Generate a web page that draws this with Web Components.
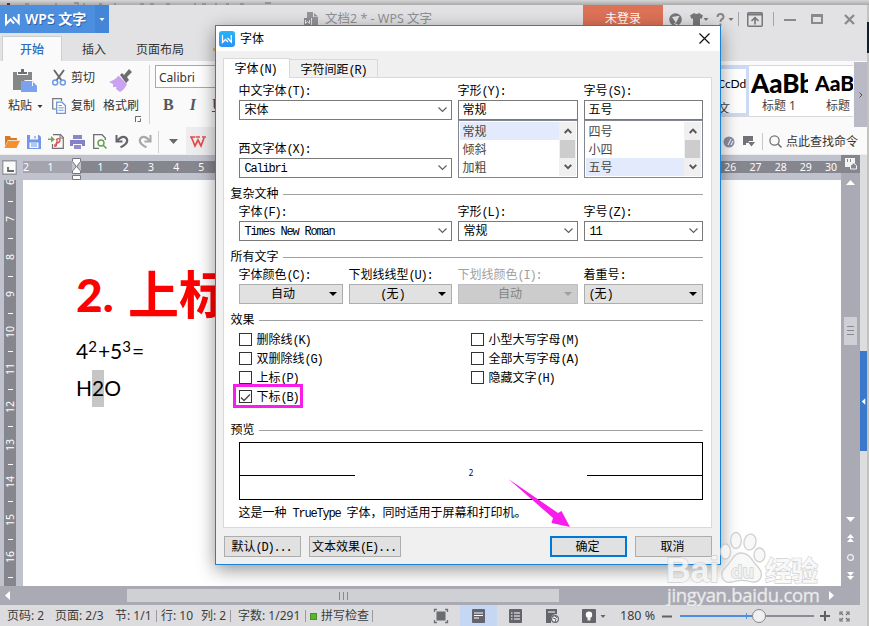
<!DOCTYPE html>
<html lang="zh-CN">
<head>
<meta charset="utf-8">
<title>WPS 文字</title>
<style>
html,body{margin:0;padding:0}
body{width:869px;height:626px;overflow:hidden;font:12px/16px "Noto Sans","Noto Sans CJK SC",sans-serif;color:#444}
</style>
</head>
<body>
<wps-app></wps-app>
<script>
const BASE = '<style>*{box-sizing:border-box}.row{display:flex}.c{flex:none;display:flex;align-items:center;white-space:pre}</style>';
function define(name, render) {
  customElements.define(name, class extends HTMLElement {
    constructor() { super(); this.attachShadow({mode: 'open'}); }
    connectedCallback() { this.shadowRoot.innerHTML = BASE + render(this); }
  });
}

/* ---- icons: [width, height, markup] ---- */
const ICONS = {
  logo: [15, 12, '<path d="M1 1V11L5.500 6.500 9 10.500M8 4L13.700 10V1" fill="none" stroke="#fff" stroke-width="2"/>'],
  down: [7, 4, '<path d="M.5 0H6.5L3.5 3.8Z" fill="currentColor"/>'],
  down5: [6, 3, '<path d="M.5 0H5.5L3 3Z" fill="currentColor"/>'],
  doc: [15, 14, '<path d="M3 0H9V5H14V14H8V6H3Z" fill="#959597"/><path d="M10 1L14 4.5H10Z" fill="#959597"/><path d="M0 6H7V13H0Z" fill="#8d8d8f"/><path d="M1.5 8V11.5L3.5 9.5 5.5 11.5V8" fill="none" stroke="#eee"/>'],
  globe: [13, 13, '<circle cx="6.5" cy="6.5" r="6.3" fill="#77777a"/><path d="M3 4L10.5 2.7 7 10Z" fill="#e4e4e6"/><path d="M5 10.5L9 12" stroke="#e4e4e6"/>'],
  shirt: [13, 12, '<path d="M4 0Q6.500 2 9 0L13 2.500 11.500 6 10 5.300V12H3V5.300L1.500 6 0 2.500Z" fill="#77777a"/>'],
  help: [9, 13, '<path d="M1.500 4Q1.500 1 4.500 1T7.500 4Q7.500 5.500 5.500 6.500 4.500 7 4.500 9" fill="none" stroke="#88888a" stroke-width="2"/><path d="M3.500 10.500h2v2h-2z" fill="#88888a"/>'],
  upbox: [16, 15, '<rect x=".75" y=".75" width="14.500" height="13.500" rx="1" fill="none" stroke="#77777a" stroke-width="1.500"/><path d="M1 2.500H15" stroke="#77777a" stroke-width="2"/><path d="M8 12.500V6M4.500 9L8 5.700 11.500 9" fill="none" stroke="#77777a" stroke-width="1.600"/>'],
  min: [12, 12, '<path d="M0 7H12" stroke="#8a8a8c" stroke-width="2"/>'],
  max: [12, 10, '<path d="M1 1H11V9H1Z" fill="none" stroke="#8a8a8c" stroke-width="2"/><path d="M0 1.500H12" stroke="#8a8a8c" stroke-width="3"/>'],
  close: [11, 11, '<path d="M1 1L10 10M10 1L1 10" stroke="#8a8a8c" stroke-width="2.300"/>'],
  paste: [25, 23, '<path d="M0 3H4V6H15V3H19V11H12L8 15V21H0Z" fill="#858688"/><path d="M5 3H8V0H11V3H14V5H5Z" fill="#6d6e70"/><path d="M8 12H19L24 17V23H8Z" fill="#7ba2ee"/><path d="M19 12V17H24" fill="#fafafa"/><path d="M20 13L24 17H20Z" fill="#7ba2ee"/>'],
  cut: [14, 16, '<path d="M2 0L10 11M12 0L4 11" stroke="#66676a" stroke-width="1.900"/><circle cx="3.200" cy="12.500" r="2.500" fill="none" stroke="#6f9be2" stroke-width="1.500"/><circle cx="10.800" cy="12.500" r="2.500" fill="none" stroke="#6f9be2" stroke-width="1.500"/>'],
  copy: [14, 16, '<path d="M4 11H.7V.7H9.500V3" fill="none" stroke="#77787a" stroke-width="1.200"/><path d="M4.700 4.200H10L13.400 7.500V15.300H4.700Z" fill="#fff" stroke="#6f95dd" stroke-width="1.300"/><path d="M6.500 7.500H10M6.500 9.800H11.700M6.500 12.200H11.700" stroke="#6f95dd"/>'],
  brush: [24, 24, '<path d="M11 6L13 4 15 6 20 0 23 3 18 8 20 11 17 14Z" fill="#6c6d70"/><path d="M9.500 6.500L18 15Q16 20 11 23L7 20 7.500 18 4 18 4 15 0 13Q6 11 9.500 6.500Z" fill="#cba2f0"/>'],
  corner: [6, 6, '<path d="M.5 6V.5H6M2.500 5.500H5.500V2.500" fill="none" stroke="#68696f"/>'],
  open: [16, 12, '<path d="M1 10V0H6L7 2H13V4H4Z" fill="#d97a20"/><path d="M4 4.800H16L12.500 12H.5Z" fill="#f6902d"/>'],
  save: [14, 14, '<path d="M0 0H12L14 2V14H0Z" fill="#7396e8"/><path d="M3 0H11V4.500H3ZM2.500 7.500H11.500V13H2.500Z" fill="#f5f8ff"/><path d="M8 1V3.500M4 9H10M4 11H10" stroke="#7396e8" stroke-width="1.200"/>'],
  pdf: [16, 15, '<path d="M5 .7H12.500L15.300 3.500V14.300H4.500V10" fill="none" stroke="#6f7073" stroke-width="1.200"/><path d="M12 1V4H15" fill="none" stroke="#6f7073"/><path d="M0 4.500H3V2L7 5.500 3 8.500V6H0Z" fill="#6eaa50"/><path d="M8 5.500Q12.500 3.500 12 6.500 11.500 9 8.500 9V11Q8 13 6.500 12 6.500 10 9 9V5.500" fill="none" stroke="#dc4e4e" stroke-width="1.300"/>'],
  print: [15, 14, '<path d="M3 0H12V4H3Z" fill="#8a86cb"/><path d="M0 5H15V11H12V9H3V11H0Z" fill="#8581c8"/><path d="M4 10H11V14H4Z" fill="#918dce"/>'],
  view: [14, 15, '<path d="M6 14.300H.7V.7H9L12.300 4V6" fill="none" stroke="#6f7073" stroke-width="1.300"/><circle cx="8" cy="9" r="3" fill="#fafafa" stroke="#60a24a" stroke-width="1.400"/><path d="M10.200 11.200L13.500 14.500" stroke="#60a24a" stroke-width="1.600"/>'],
  undo: [14, 13, '<path d="M1.500 0V6.500H7.500" fill="none" stroke="#64656a" stroke-width="2"/><path d="M2 6Q7 .5 10.500 2.500 14 5 10.500 9 8.500 11 5.500 12.200" fill="none" stroke="#64656a" stroke-width="2.200"/>'],
  redo: [14, 13, '<g transform="matrix(-1 0 0 1 14 0)"><path d="M1.500 0V6.500H7.500" fill="none" stroke="#a8a8aa" stroke-width="2"/><path d="M2 6Q7 .5 10.500 2.500 14 5 10.500 9 8.500 11 5.500 12.200" fill="none" stroke="#a8a8aa" stroke-width="2.200"/></g>'],
  down9: [9, 5, '<path d="M0 0H9L4.500 5Z" fill="#68696c"/>'],
  redw: [16, 11, '<path d="M0 1H5M1.500 1.500L5 10 8 4 11 10 14 2M5.500 1H10M12 1H16" fill="none" stroke="#e94848" stroke-width="1.700"/>'],
  leaf: [12, 12, '<circle cx="5" cy="6" r="5.500" fill="#8d90a2"/><path d="M4 9L7 3M7 9L9 5" stroke="#fff"/>'],
  flag: [12, 11, '<path d="M0 0H10V5H6L5 7H3V9H0Z" fill="#727377"/><path d="M5 6H12L8.500 10.500Z" fill="#727377"/>'],
  search: [13, 13, '<circle cx="5.500" cy="5.500" r="4.600" fill="none" stroke="#707176" stroke-width="1.300"/><path d="M9 9L12.500 12.500" stroke="#707176" stroke-width="1.600"/>'],
  tabsel: [15, 15, '<path d="M.75.75H14.250V14.250H.75Z" fill="#fafafa" stroke="#96969e" stroke-width="1.300"/><path d="M6 7V11H12" fill="none" stroke="#66676c" stroke-width="1.800"/>'],
  indent: [9, 22, '<path d="M.5 3.500V.5H8.500V3.500L5 8V9L8.500 13V15.500H.5V13L4 9V8Z" fill="#fff" stroke="#77787f"/><path d="M.5 17.500H8.500V21.500H.5Z" fill="#fff" stroke="#77787f"/>'],
  hand: [12, 12, '<path d="M0 0H10V5L5 9H0Z" fill="#f4f4f4"/><path d="M2.500 1V4M5.500 1V4" stroke="#86868e"/><path d="M5.500 7.500L8.500 5 11.500 7.500V11H5.500Z" fill="#86868e" stroke="#f4f4f4"/>'],
  triup: [9, 5, '<path d="M4.500 0L9 5H0Z" fill="#fff"/>'],
  tridown: [9, 5, '<path d="M0 0H9L4.500 5Z" fill="#fff"/>'],
  trileft: [5, 9, '<path d="M5 0V9L0 4.500Z" fill="#fff"/>'],
  triright: [5, 9, '<path d="M0 0V9L5 4.500Z" fill="#fff"/>'],
  dblup: [7, 8, '<path d="M3.500 0L7 4H0ZM3.500 4L7 8H0Z" fill="#fff"/>'],
  dbldown: [7, 8, '<path d="M3.500 8L7 4H0ZM3.500 4L7 0H0Z" fill="#fff"/>'],
  ring: [7, 7, '<circle cx="3.500" cy="3.500" r="2.900" fill="none" stroke="#f4f4f4" stroke-width="1.200"/>'],
  full: [14, 14, '<path d="M.5 3V.5H3M11 .5H13.500V3M13.500 11V13.500H11M3 13.500H.5V11" fill="none" stroke="#707176" stroke-width="1.300"/><path d="M2.500 2.500H11.500V11.500H2.500Z" fill="#6b6c70"/>'],
  page: [13, 14, '<rect width="13" height="14" rx="1" fill="#64656c"/><path d="M2 4H11M2 6.500H11M2 9H7" stroke="#fff"/>'],
  list: [13, 14, '<rect width="13" height="14" rx="1" fill="#64656c"/><path d="M2 4H3.500M5 4H11M2 7H3.500M5 7H11M2 10H3.500M5 10H11" stroke="#fff" stroke-width="1.200"/>'],
  web: [13, 14, '<path d="M0 0H11V5Q6 5 5 9L5 14H0Z" fill="#64656c"/><path d="M2 3H9" stroke="#fff"/><circle cx="9" cy="10" r="3.400" fill="#eee" stroke="#64656c" stroke-width="1.200"/><path d="M7 9L10 10 9 13M9 7L11 9" stroke="#64656c" fill="none"/>'],
  bulb: [14, 14, '<rect width="14" height="14" rx="1" fill="#64656c"/><circle cx="7" cy="5.700" r="3.200" fill="#fff"/><path d="M5.500 8H8.500V11.500H5.500Z" fill="#eee"/>'],
  minus: [10, 3, '<path d="M0 1.500H10" stroke="#606166" stroke-width="2"/>'],
  plus: [10, 10, '<path d="M0 5H10M5 0V10" stroke="#606166" stroke-width="2"/>'],
  expand: [11, 11, '<path d="M1 4V1H4M7 1H10V4M10 7V10H7M4 10H1V7M2 2L4 4M9 2L7 4M9 9L7 7M2 9L4 7" fill="none" stroke="#707176" stroke-width="1.200"/>'],
  wapp: [16, 16, '<defs><linearGradient id="g" x2="0" y2="1"><stop stop-color="#27b5f5"/><stop offset="1" stop-color="#2f8ff5"/></linearGradient></defs><rect width="16" height="16" rx="3" fill="url(#g)"/><path d="M3.500 4V11.500L6.500 8.500 9 11M8.500 7L12.300 11V4" fill="none" stroke="#fff" stroke-width="1.300"/>'],
  xthin: [11, 11, '<path d="M.5.500L10.500 10.500M10.500.500L.5 10.500" stroke="#111" stroke-width="1.200"/>'],
  chev: [9, 6, '<path d="M.5.500L4.500 4.500 8.500.500" fill="none" stroke="#606060" stroke-width="1.200"/>'],
  chevdn: [8, 6, '<path d="M.7.800L4 4.200 7.300.800" fill="none" stroke="#555" stroke-width="1.900"/>'],
  chevup: [8, 6, '<path d="M.7 5L4 1.600 7.300 5" fill="none" stroke="#555" stroke-width="1.900"/>'],
  tri: [8, 4, '<path d="M0 0H8L4 4Z" fill="currentColor"/>'],
  tick: [13, 13, '<path d="M2 6.500L5 9.500 11 3.500" fill="none" stroke="#444" stroke-width="1.300"/>'],
  gt: [4, 6, '<path d="M.5.500L3 3 .5 5.500" fill="none" stroke="#555"/>']
};
define('ui-icon', el => {
  const [w, h, d] = ICONS[el.getAttribute('name')];
  return `<style>:host{display:inline-block;flex:none;width:${w}px;height:${h}px}svg{display:block;overflow:visible}</style><svg width="${w}" height="${h}" viewBox="0 0 ${w} ${h}">${d}</svg>`;
});
const ic = (n, s = '') => `<ui-icon name="${n}" style="${s}"></ui-icon>`;
const cell = (w, c, s = '') => `<div class="c" style="width:${w}px;${s}">${c}</div>`;

/* Half-width latin runs on a 6px pitch beside 12px full-width characters */
define('sim-text', el => `<style>:host{display:block;height:14px;white-space:pre;font:12px/14px "Noto Sans CJK SC",sans-serif;color:inherit}
div{transform:translate(-.6px,-1px)}
span{font-family:"Liberation Mono",monospace;letter-spacing:-1.2px}</style><div>` +
  el.getAttribute('t').replace(/[\x20-\x7e]+/g, m => `<span>${m}</span>`) + '</div>');
const sim = (t, s = '') => `<sim-text t="${t}" style="${s}"></sim-text>`;

/* ---- main window ---- */
define('wps-titlebar', () => `<style>
:host{display:block;height:28px;color:#919193}
.row{height:28px;align-items:flex-start}.c{height:28px}
.sep{width:1px;height:14px;background:#a4a4a6;margin-top:7px;flex:none}
</style><div class="row">
${cell(95, ic('logo', 'margin:0 5px') + 'WPS 文字', 'background:#4c8fdf;color:#fff;font-size:14px;font-weight:600;text-shadow:1px 1px #2c62a8')}
${cell(14, ic('down5', 'margin-left:4px'), 'background:#4386d8;color:#fff')}
${cell(195, '')}${cell(21, ic('doc'))}${cell(258, '文档2 * - WPS 文字', 'font-size:12.5px')}
${cell(80, '未登录', 'background:#dd7257;color:#fff;justify-content:center')}
${cell(27, ic('globe', 'margin-left:6px'))}${cell(26, ic('shirt') + ic('down5', 'color:#777'))}
${cell(22, ic('help') + ic('down5', 'color:#777;margin-left:3px'))}
<div class="sep"></div>${cell(34, ic('upbox', 'margin-left:8px'))}<div class="sep"></div>
${cell(37, ic('min', 'margin-left:10px'))}${cell(33, ic('max'))}${cell(15, ic('close'))}
</div>`);

define('wps-tabs', () => `<style>
:host{display:block;height:28px;padding-top:3px}
.row{height:25px;align-items:center;color:#333}
.c{padding-top:2px}
.on{height:25px;background:#fafafa;border:1px solid #cfcfd2;border-bottom:0;justify-content:center;color:#2d6cc0;font-weight:500}
</style><div class="row">${cell(2, '')}<div class="c on" style="width:60px">开始</div>${cell(20, '')}${cell(54, '插入')}${cell(77, '页面布局')}${cell(3, '<i style="width:3px;height:3px;background:#eeb060"></i>')}</div>`);

define('style-tile', el => `<style>
:host{display:block;flex:none;height:50px;overflow:hidden;color:#000;white-space:nowrap}
.s{height:33px;display:flex;align-items:center;overflow:hidden;font-family:Lato,sans-serif}
.n{height:14px;line-height:14px;color:#444}
</style><div class="s"><slot></slot></div><div class="n" style="text-indent:${el.getAttribute('indent')}px">${el.getAttribute('label')}</div>`);

define('wps-ribbon', () => `<style>
:host{display:block;height:64px;background:#fafafa;color:#333}
.bar{display:flex;height:64px;align-items:flex-start}
.big{display:flex;flex-direction:column;align-items:center;flex:none;padding-top:8px}
.big p{margin:5px 0 0;display:flex;align-items:center;height:18px}
.mid{flex:none;width:53px;padding:8px 0 0 7px}
.mid p{margin:0 0 11px;display:flex;gap:5px;height:17px;align-items:center;width:60px}
.sep{width:1px;height:59px;margin-top:4px;background:#d0d0d3;flex:none}
.font{width:62px;height:23px;border:1px solid #a9a9ad;background:#fff;font:12px/23px "Noto Sans",sans-serif;padding-left:3px}
.biu{display:flex;font:bold 16px/20px "Liberation Serif",serif;color:#55565a;padding:7px 0 0 8px;gap:16px}
.gal{display:flex;margin-top:4px;height:52px;border:1px solid #d8d8da;border-width:1px 0;width:134px;background:#fff;flex:none}
.more{width:13px;height:65px;margin:1px 0 0 1px;background:#b9bac5;display:flex;align-items:center;justify-content:center;flex:none}
</style><div class="bar">
<div class="big" style="width:45px;padding-left:6px">${ic('paste')}<p>粘贴${ic('down5', 'margin-left:5px')}</p></div>
<div class="mid"><p>${ic('cut')}<span style="white-space:nowrap">剪切</span></p><p>${ic('copy')}<span style="white-space:nowrap">复制</span></p></div>
<div class="big" style="width:46px">${ic('brush')}<p style="margin-top:4px;white-space:nowrap">格式刷</p>${ic('corner', 'align-self:flex-end;margin:1px 3px 0 0')}</div>
${cell(5, '')}<div class="sep"></div>
<div style="padding:4px 0 0 5px;width:569px;flex:none"><div class="font">Calibri</div><div class="biu"><span>B</span><i>I</i><u>U</u></div></div>
<div class="gal"><style-tile label="文" indent="-1" style="width:30px;border:3px solid #ccdaf6;height:50px;border-left:0"><span style="font-size:12px;margin:-4px 0 0 -2px">CcDd</span></style-tile>
<style-tile label="标题 1" indent="11" style="width:57px;margin-left:2px"><b style="font-size:26px;font-weight:900">AaBb</b></style-tile>
<style-tile label="标题 2" indent="11" style="width:38px;margin-left:7px"><b style="font-size:21px;font-weight:900">AaBb</b></style-tile></div>
<div class="more">${ic('gt')}</div></div>`);

define('wps-quickbar', () => `<style>
:host{display:block;height:30px;background:#fafafa;border-bottom:1px solid #eee;color:#333}
.row{height:33px;align-items:center;overflow:hidden}.c{height:29px}
</style><div class="row">${cell(4, '')}${cell(23, ic('open'))}${cell(21, ic('save'))}${cell(22, ic('pdf'))}${cell(23, ic('print'))}${cell(22, ic('view'))}${cell(23, ic('undo'))}${cell(20, ic('redo'))}
${cell(1, '', 'background:#d0d0d3;height:22px')}${cell(10, '')}${cell(17, ic('down9'))}${cell(36, ic('redw'), 'background:#ededef;padding-left:4px')}
${cell(502, '')}${cell(19, ic('leaf'))}${cell(19, ic('flag'))}${cell(1, '', 'background:#c8c8cc;height:17px')}${cell(6, '')}${cell(17, ic('search'))}${cell(80, '点此查找命令')}</div>`);

/* Numbers 6-25 of the horizontal scale lie under the dialog and stay blank */
define('wps-ruler', () => `<style>
:host{display:block;height:25px;background:#c0c2cd;font:10.5px/12px "Noto Sans",sans-serif;color:#fff}
.row{height:25px}.strip{margin-top:6px;height:12px;display:flex;flex:none}
.n{width:25.19px;text-align:center;flex:none}
</style><div class="row">${cell(23, ic('tabsel', 'margin-left:2px'), 'height:25px')}
<div class="strip" style="background:#a3a4ae;width:49px"><span style="width:15px">2</span><span class="n">1</span></div>
<div style="width:9px;padding-top:3px;flex:none">${ic('indent')}</div>
<div class="strip" style="background:#86868e;width:760px"><span class="n" style="margin-left:7px">1</span>${Array.from({length: 29}, (_, i) => `<span class="n">${i < 4 || i > 23 ? i + 2 : ''}</span>`).join('')}</div></div>`);

define('wps-vruler', () => `<style>
:host{display:block;width:23px;flex:none;background:#c0c2cd;padding-left:4px;overflow:hidden}
.s{width:12px;height:406px;background:#86868e;color:#fff;font:10.5px/12px "Noto Sans",sans-serif;overflow:hidden}
.i{height:37.6px;display:flex;flex-direction:column;align-items:center;justify-content:space-between}
.n{height:14px;writing-mode:vertical-rl;transform:rotate(180deg);text-align:center}
.t{width:5px;height:1px;background:#fff;margin-bottom:10.500px}
.in{margin-top:-5.500px}
</style><div class="s"><div class="in">${Array.from({length: 11}, (_, i) => `<div class="i"><span class="n">${i + 6}</span><span class="t"></span></div>`).join('')}</div></div>`);

define('wps-page', () => `<style>
:host{display:block;width:818px;flex:none;height:406px;background:#fff;color:#000;padding:82px 0 0 53px;font-family:Lato,sans-serif;white-space:nowrap}
h1{margin:0;height:64px;font:900 46px/66px Lato,"Noto Sans CJK SC",sans-serif;color:#f00;display:flex;width:240px;overflow:hidden}
h1 b{font:700 51px/60px "Noto Sans CJK SC",sans-serif}
p{margin:0;font-size:21px;height:37px;line-height:36px}
sup{font-size:15px;line-height:0;vertical-align:7.5px;margin:0 1px 0 0}
mark{background:#c6c6c6;color:#000;display:inline-block;height:37px;line-height:36px;vertical-align:top}
</style><h1><span style="width:52px">2.</span><b>上标</b></h1><p style="margin-top:7px">4<sup>2</sup>+5<sup>3</sup>=</p><p>H<mark>2</mark>O</p>`);

define('wps-vscroll', () => `<style>
:host{display:flex;flex-direction:column;align-items:center;width:19px;flex:none;height:431px;background:#aaaab4}
.top{width:19px;height:18px;background:#86868e;display:flex;align-items:center;justify-content:center;flex:none}
.thumb{width:13px;height:28px;background:#cfd0d5;margin-top:132px;padding:9px 3px;flex:none}
.thumb i{display:block;height:1px;background:#888890;margin-bottom:3px}
</style><div class="top">${ic('hand')}</div>${ic('triup', 'margin-top:7px')}<div class="thumb"><i></i><i></i><i></i></div>
${ic('tridown', 'margin-top:172px')}${ic('dblup', 'margin-top:12px')}${ic('ring', 'margin-top:12px')}${ic('dbldown', 'margin-top:11px')}`);

define('wps-hscroll', () => `<style>
:host{display:flex;align-items:center;height:19px;background:#aaaab4;width:860px}
.t{width:432px;height:13px;background:#cfd0d4;margin-left:117px;display:flex;justify-content:center;gap:3px;padding-top:3px}
.t i{width:1px;height:8px;background:#888890}
</style>${ic('trileft', 'margin-left:5px')}<div class="t"><i></i><i></i><i></i></div>${ic('triright', 'margin-left:270px')}`);

define('wps-status', () => `<style>
:host{display:block;height:21px;background:#dcdcdf;color:#3c3c40}
.row{height:21px;align-items:center}.c{height:21px;padding-top:1px}
.sep{width:1px;height:12px;background:#9a9a9e;flex:none}
.track{width:134px;height:16px;display:flex;align-items:center;flex:none}
</style><div class="row">${cell(7, '')}${cell(48, '页码: 2')}${cell(60, '页面: 2/3')}${cell(41, '节: 1/1')}<div class="sep"></div>${cell(4, '')}${cell(40, '行: 10')}${cell(29, '列: 2')}<div class="sep"></div>${cell(7, '')}${cell(67, '字数: 1/291')}<div class="sep"></div>
${cell(4, '')}${cell(11, '<i style="width:7px;height:7px;background:#5cb531;border:1px solid #3f972c"></i>')}${cell(51, '拼写检查')}<div class="sep"></div>
${cell(61, '')}${cell(26, ic('full'))}${cell(37, ic('page'), 'background:#c5d7f3;padding-left:12px')}${cell(12, '')}${cell(37, ic('list'))}${cell(36, ic('web'))}${cell(18, ic('bulb'))}${cell(20, ic('down5', 'color:#666'))}
${cell(42, '180 %', 'font-size:12.5px')}${cell(18, ic('minus'))}
<div class="track"><i style="width:66px;height:2px;background:#4b8de0"></i><i style="width:1px;height:6px;background:#4b8de0"></i><i style="width:5px;height:2px;background:#4b8de0"></i><i style="width:14px;height:14px;border:1px solid #88888c;border-radius:7px;background:#f0f0f0"></i><i style="width:48px;height:2px;background:#8a8b94"></i></div>
${cell(6, '')}${cell(19, ic('plus'))}${cell(12, ic('expand'))}</div>`);

/* ---- dialog controls ---- */
define('combo-box', el => `<style>
:host{display:flex;height:20px;border:1px solid #7a7a7a;background:#fff;align-items:center;padding:0 4px 0 5px;box-sizing:border-box;color:#000}
sim-text{flex:1}</style>${sim(el.getAttribute('value'))}${el.hasAttribute('plain') ? '' : ic('chev')}`);
define('drop-button', el => {
  const off = el.hasAttribute('disabled');
  return `<style>:host{display:flex;height:20px;border:1px solid ${off ? '#bfbfbf' : '#adadad'};background:${off ? '#ccc' : '#e1e1e1'};align-items:center;padding:0 5px 0 4px;box-sizing:border-box;color:${off ? '#838383' : '#000'}}
sim-text{flex:1;text-align:${el.hasAttribute('left') ? 'left' : 'center'};padding-right:${el.hasAttribute('left') ? 0 : 6}px}</style>${sim(el.getAttribute('value'))}${ic('tri', off ? 'color:#a0a0a0' : '')}`;
});
define('list-box', el => {
  const sel = +el.getAttribute('selected');
  return `<style>:host{display:flex;height:58px;border:1px solid #828790;background:#fff;padding:1px;box-sizing:border-box;color:#444}
.l{flex:1}.l div{height:18px;padding:3px 0 0 3px}.l .on{background:#e2eafc}
.s{width:17px;background:#f0f0f0;display:flex;flex-direction:column;align-items:center;justify-content:space-between;padding:6px 0}
.s i{width:15px;height:18px;background:#cdcdcd}</style>
<div class="l">${el.getAttribute('items').split(',').map((t, i) => `<div class="${i === sel ? 'on' : ''}">${sim(t)}</div>`).join('')}</div>
<div class="s">${ic('chevup')}<i></i>${ic('chevdn')}</div>`;
});
define('form-field', el => `<style>:host{display:block;box-sizing:border-box}.l{height:16px;color:${el.hasAttribute('dim') ? '#a0a0a0' : '#000'}}</style>
<div class="l">${sim(el.getAttribute('label'))}</div><slot></slot>`);
define('group-title', el => `<style>:host{display:flex;height:14px;align-items:center;gap:4px;margin-left:-8px;color:#000}hr{flex:1;border:0;height:1px;background:#a0a0a0;margin:0}</style>${sim(el.getAttribute('label'))}<hr>`);
define('check-item', el => `<style>:host{display:flex;height:19px;gap:5px;align-items:flex-start;color:#000}
i{width:13px;height:13px;border:1px solid #333;background:#fff;flex:none}i ui-icon{margin:-1px}sim-text{flex:none}</style>
<i>${el.hasAttribute('checked') ? ic('tick') : ''}</i>${sim(el.getAttribute('label'))}`);
define('push-button', el => `<style>:host{display:flex;height:21px;border:1px solid #adadad;background:#e1e1e1;align-items:center;justify-content:center;box-sizing:border-box;color:#000;flex:none}
:host([primary]){border:2px solid #0078d7}</style>${sim(el.getAttribute('label'), 'margin-right:1px')}`);

define('font-dialog', () => `<style>
:host{display:flex;flex-direction:column;box-sizing:border-box;width:506px;height:540px;border:1px solid #1883d7;background:#f0f0f0;box-shadow:0 5px 17px rgba(0,0,0,.42);color:#000}
.title{height:25px;background:#fff;display:flex;align-items:center;padding:0 10px 0 3px;gap:5px;flex:none}
.title span{flex:1}
.tabs{display:flex;align-items:flex-end;height:26px;padding-left:7px;flex:none}
.tabs div{border:1px solid #d9d9d9;border-bottom:0}
.t1{width:67px;height:20px;background:#fff;padding:3px 0 0 11px;margin-bottom:-1px;position:relative}
.t2{width:88px;height:18px;padding:3px 0 0 11px;border-left:0!important}
.panel{margin:0 0 0 7px;width:489px;height:451px;border:1px solid #d9d9d9;background:#fff;padding:6px 7px 0 15px;flex:none}
.grid{display:grid;column-gap:6px;width:464px}
.g3{grid-template-columns:213px 120px 119px}
.g4{grid-template-columns:104px 103px 120px 119px}
.checks{display:grid;grid-template-columns:232px 1fr;height:76px;margin-top:6px}
group-title{width:472px}
.prev{height:58px;border:1px solid #000;width:464px;margin-top:5px;display:flex;align-items:center;justify-content:space-between;font:8px/10px "Noto Sans",sans-serif}
.prev i{width:115px;height:1px;background:#000;margin-top:8px}
.btns{display:flex;padding:8px 0 0 8px}
</style>
<div class="title">${ic('wapp')}<span>字体</span>${ic('xthin')}</div>
<div class="tabs"><div class="t1">${sim('字体(N)')}</div><div class="t2">${sim('字符间距(R)')}</div></div>
<div class="panel">
<div class="grid g3">
<div><form-field label="中文字体(T):"><combo-box value="宋体"></combo-box></form-field><form-field label="西文字体(X):" style="margin-top:22px"><combo-box value="Calibri"></combo-box></form-field></div>
<form-field label="字形(Y):"><combo-box plain value="常规" style="padding-left:4px"></combo-box><list-box items="常规,倾斜,加粗" selected="0"></list-box></form-field>
<form-field label="字号(S):"><combo-box plain value="五号" style="padding-left:4px"></combo-box><list-box items="四号,小四,五号" selected="2"></list-box></form-field>
</div>
<group-title label="复杂文种" style="margin-top:9px"></group-title>
<div class="grid g3" style="margin-top:4px">
<form-field label="字体(F):"><combo-box value="Times New Roman"></combo-box></form-field>
<form-field label="字形(L):"><combo-box value="常规"></combo-box></form-field>
<form-field label="字号(Z):"><combo-box value="11"></combo-box></form-field></div>
<group-title label="所有文字" style="margin-top:9px"></group-title>
<div class="grid g4" style="margin-top:4px">
<form-field label="字体颜色(C):"><drop-button value="自动"></drop-button></form-field>
<form-field label="下划线线型(U):"><drop-button value="(无)"></drop-button></form-field>
<form-field dim label="下划线颜色(I):"><drop-button disabled value="自动"></drop-button></form-field>
<form-field label="着重号:"><drop-button left value="(无)"></drop-button></form-field></div>
<group-title label="效果" style="margin-top:9px"></group-title>
<div class="checks"><div><check-item label="删除线(K)"></check-item><check-item label="双删除线(G)"></check-item><check-item label="上标(P)"></check-item><check-item checked label="下标(B)"></check-item></div>
<div><check-item label="小型大写字母(M)"></check-item><check-item label="全部大写字母(A)"></check-item><check-item label="隐藏文字(H)"></check-item></div></div>
<group-title label="预览" style="margin-top:14px"></group-title>
<div class="prev"><i></i><span style="margin-top:4px">2</span><i></i></div>
${sim('这是一种 TrueType 字体，同时适用于屏幕和打印机。', 'margin-top:6px')}
</div>
<div class="btns"><push-button label="默认(D)..." style="width:77px"></push-button><push-button label="文本效果(E)..." style="width:92px;margin-left:8px"></push-button><push-button primary label="确定" style="width:77px;margin-left:149px"></push-button><push-button label="取消" style="width:77px;margin-left:8px"></push-button></div>`);

define('callout-marks', () => `<style>:host{display:block;pointer-events:none}svg{display:block}</style>
<svg width="869" height="626"><rect x="234.500" y="385.500" width="67" height="21" fill="none" stroke="#f91dec" stroke-width="3"/>
<path d="M508.500 479L558 513 561.500 511 570 527 551.500 523 553 518Z" fill="#f91dec"/></svg>`);

define('baidu-mark', () => `<style>:host{display:block;width:156px;height:76px}svg{display:block;overflow:visible;opacity:.85}text{paint-order:stroke}</style>
<svg width="156" height="76" fill="#f7f7f7" stroke="#c9c9c9" stroke-width="1.300"><g font-family="Liberation Sans">
<ellipse cx="7.500" cy="19.500" rx="5" ry="7.500"/><ellipse cx="18" cy="8.500" rx="5.300" ry="8"/><ellipse cx="32" cy="10" rx="6" ry="8" transform="rotate(12 32 10)"/><ellipse cx="41.500" cy="23" rx="5.500" ry="7"/>
<path d="M23 21C32 21 34 29 40 35C47 43 42 51 34 50C28 48 20 48 14 50C4 52 1 42 7 36C14 30 15 21 23 21Z"/>
<text x="-52" y="50" font-size="35" font-weight="bold" textLength="53" lengthAdjust="spacingAndGlyphs">Bai</text>
<text x="13" y="46" font-size="19" font-weight="bold" fill="#eee">du</text>
<text x="47" y="49" font-size="27" font-weight="bold" font-family="Noto Sans CJK SC" textLength="53">经验</text>
<text x="-51" y="70" font-size="18.500" font-family="Open Sans" stroke-width=".8" textLength="153">jingyan.baidu.com</text></g></svg>`);

define('wps-app', () => `<style>
:host{display:block;position:relative;width:869px;height:626px;overflow:hidden;background:#c3c4be}
.top{height:5px;background:linear-gradient(#d6d6d6,#a9a9a9)}
.top svg{display:block}
.main{width:867px;background:#e2e2e5}
.body{display:flex;height:450px}
.left{width:841px;flex:none}
.work{display:flex}
.side{width:7px;background:#dddde0;flex:none;padding-top:196px}
.side div{height:100px;background:#3b78c9;display:flex;align-items:center;justify-content:center}
font-dialog{position:absolute;left:215px;top:25px}
callout-marks{position:absolute;left:0;top:0}
baidu-mark{position:absolute;left:718px;top:532px}
.edge{position:absolute;left:867px;top:22px;width:2px;height:31px;background:#10202e}
</style>
<div class="top"><svg width="869" height="5"><path d="M7 3h3v2h-3z" fill="#802020"/><path d="M25 4h4M56 3v2M74 3h4v2M84 3v2M99 4h3M115 3v2M140 4h4M150 4h4M166 4h4M195 3v2M202 4h4M216 3v2M226 4h3M240 4h4M265 3h6" stroke="#888" stroke-width="1.500" fill="none"/></svg></div>
<div class="main"><wps-titlebar></wps-titlebar><wps-tabs></wps-tabs><wps-ribbon></wps-ribbon><wps-quickbar></wps-quickbar>
<div class="body"><div><div class="work"><div class="left"><wps-ruler></wps-ruler><div class="work"><wps-vruler></wps-vruler><wps-page></wps-page></div></div><wps-vscroll></wps-vscroll></div><wps-hscroll></wps-hscroll></div>
<div class="side"><div>${ic('trileft', 'transform:scale(.7)')}</div></div></div>
<wps-status></wps-status></div>
<div class="edge"></div><font-dialog></font-dialog><callout-marks></callout-marks><baidu-mark></baidu-mark>`);
</script>
</body>
</html>
